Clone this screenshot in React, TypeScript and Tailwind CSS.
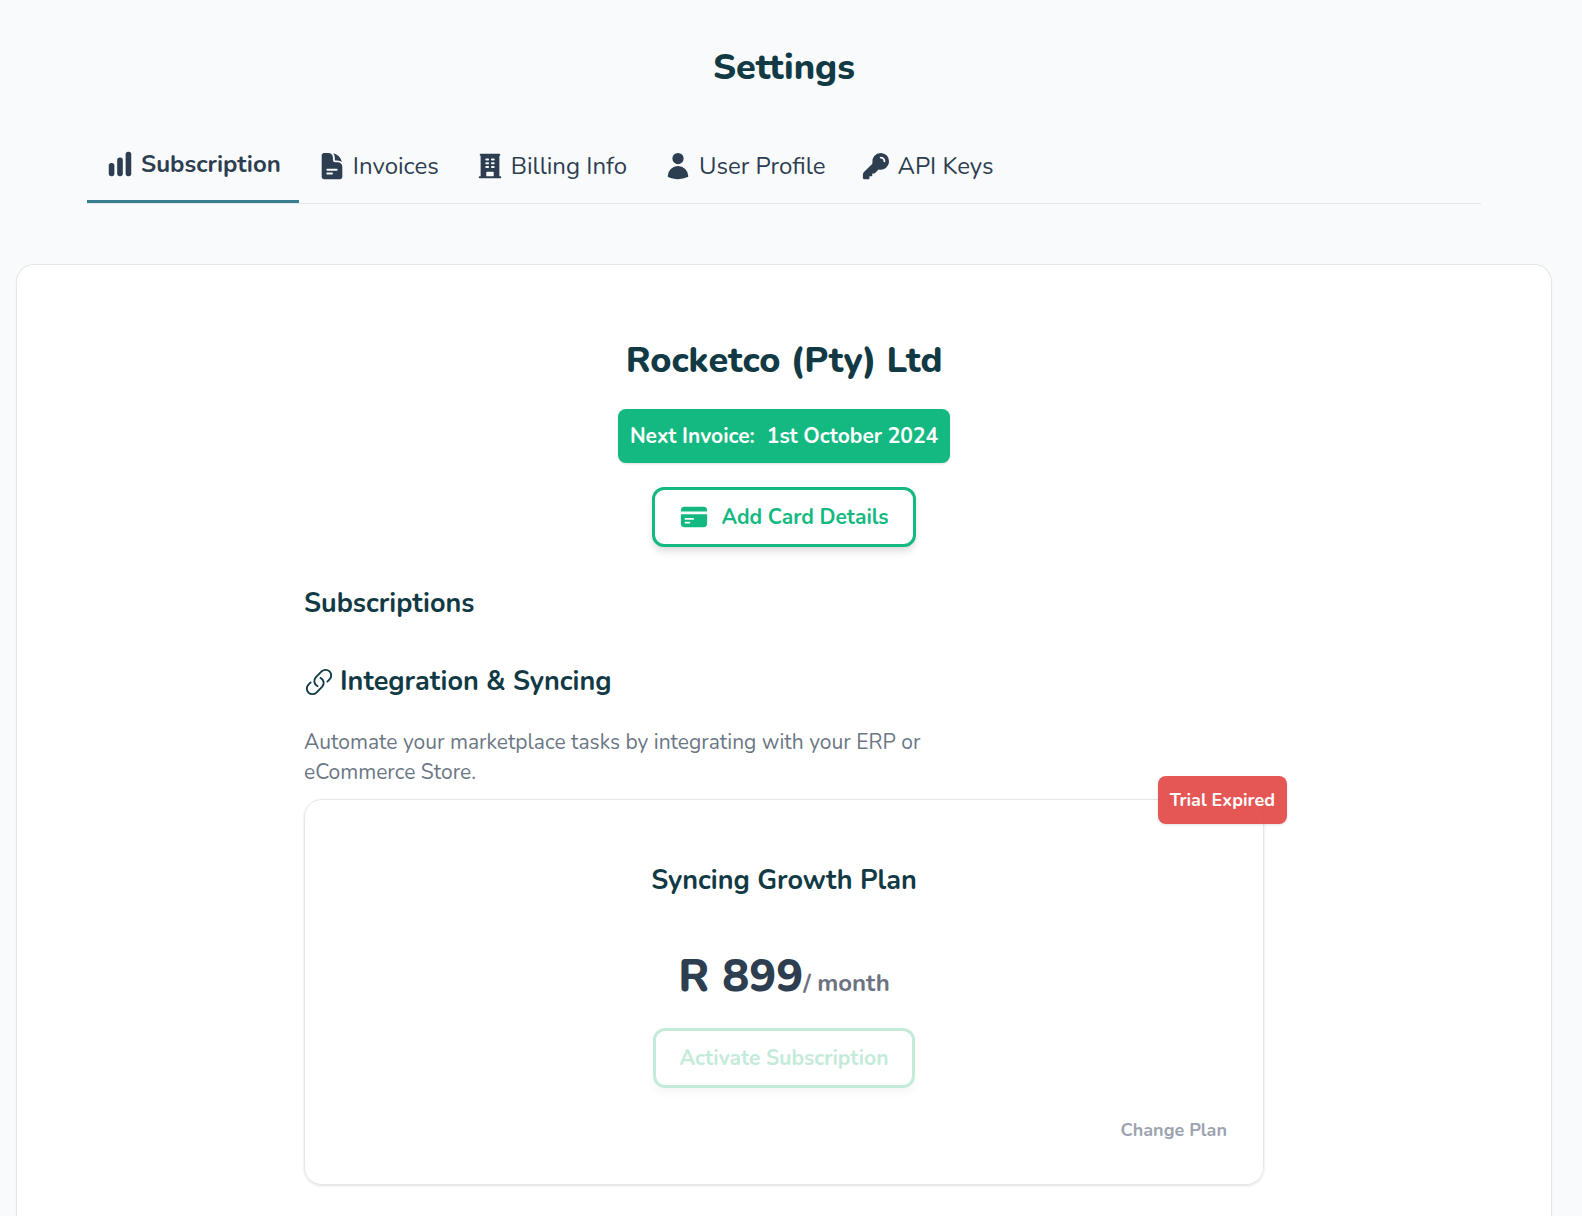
import type { IconType } from "react-icons";
import {
  HiBuildingOffice,
  HiChartBar,
  HiCreditCard,
  HiDocumentText,
  HiKey,
  HiOutlineLink,
  HiUser,
} from "react-icons/hi2";

const tabs: { label: string; icon: IconType; active?: boolean }[] = [
  { label: "Subscription", icon: HiChartBar, active: true },
  { label: "Invoices", icon: HiDocumentText },
  { label: "Billing Info", icon: HiBuildingOffice },
  { label: "User Profile", icon: HiUser },
  { label: "API Keys", icon: HiKey },
];

function Tabs() {
  return (
    <nav className="mx-[71px] mt-9 flex border-b border-[#e5e7eb] text-2xl leading-9 text-[#2d3e50]">
      {tabs.map(({ label, icon: Icon, active }) => (
        <a
          key={label}
          href="#"
          aria-current={active ? "page" : undefined}
          className={
            active
              ? "flex h-[75px] items-center gap-1.5 border-b-[3px] border-[#3a7d8c] px-[18px] font-bold"
              : "flex h-[75px] items-center gap-1.5 px-[18px]"
          }
        >
          <Icon className="size-[30px]" aria-hidden="true" />
          {label}
        </a>
      ))}
    </nav>
  );
}

function PlanCard() {
  return (
    <div className="relative mt-3 flex flex-col items-center rounded-[18px] border border-[#e5e7eb] px-9 pt-[63px] pb-10 shadow-sm">
      <span className="absolute -top-6 -right-6 rounded-lg bg-[#e34542] px-3 py-[11px] text-lg leading-[26px] font-bold text-white opacity-90 shadow">
        Trial Expired
      </span>
      <h4 className="text-[27px] leading-9 font-bold text-[#123a45]">Syncing Growth Plan</h4>
      <p className="mt-12 flex items-baseline text-[45px] leading-[60px] font-extrabold text-[#2d3e50]">
        R 899
        <span className="text-2xl font-bold text-[#6b7280]">/ month</span>
      </p>
      <button
        type="button"
        disabled
        className="mt-[21px] h-[60px] rounded-xl border-[3px] border-[#c4ebd9] bg-white px-6 text-[21px] leading-[30px] font-bold text-[#c4ebd9] shadow-[0_6px_9px_-1px_rgba(0,0,0,0.04)]"
      >
        Activate Subscription
      </button>
      <button type="button" className="mt-7 self-end text-lg leading-7 font-bold text-[#9ca3af]">
        Change Plan
      </button>
    </div>
  );
}

export default function App() {
  return (
    <div className="min-h-screen bg-[#f9fafc] pt-11 pr-[30px] pl-4 font-['Nunito',sans-serif]">
      <h1 className="text-center text-4xl leading-[48px] font-extrabold text-[#123a45]">Settings</h1>
      <Tabs />
      <main className="mt-[60px] rounded-t-[18px] border border-b-0 border-[#e5e7eb] bg-white px-6 pt-[72px] pb-8 shadow-xs">
        <div className="mx-auto flex max-w-[960px] flex-col">
          <h2 className="text-center text-4xl leading-[48px] font-extrabold text-[#123a45]">
            Rocketco (Pty) Ltd
          </h2>
          <p className="mt-6 flex gap-3 self-center rounded-lg bg-[#14b981] px-3 py-3 text-[21px] leading-[30px] font-bold text-white shadow">
            <span>Next Invoice:</span>
            <span>1st October 2024</span>
          </p>
          <button
            type="button"
            className="mt-6 flex h-[60px] items-center gap-3 self-center rounded-xl border-[3px] border-[#14b981] bg-white px-6 text-[21px] leading-[30px] font-bold text-[#14b981] shadow-[0_6px_9px_-1px_rgba(0,0,0,0.1),0_3px_6px_-1px_rgba(0,0,0,0.06)]"
          >
            <HiCreditCard className="size-[30px]" aria-hidden="true" />
            Add Card Details
          </button>

          <h3 className="mt-[39px] text-[27px] leading-9 font-bold text-[#123a45]">Subscriptions</h3>
          <h3 className="mt-[42px] flex items-center gap-1.5 text-[27px] leading-9 font-bold text-[#123a45]">
            <HiOutlineLink className="size-[30px]" aria-hidden="true" />
            Integration &amp; Syncing
          </h3>
          <p className="mt-[27px] max-w-[640px] text-[21px] leading-[30px] text-[#6b7785]">
            Automate your marketplace tasks by integrating with your ERP or eCommerce Store.
          </p>
          <PlanCard />
        </div>
      </main>
    </div>
  );
}
